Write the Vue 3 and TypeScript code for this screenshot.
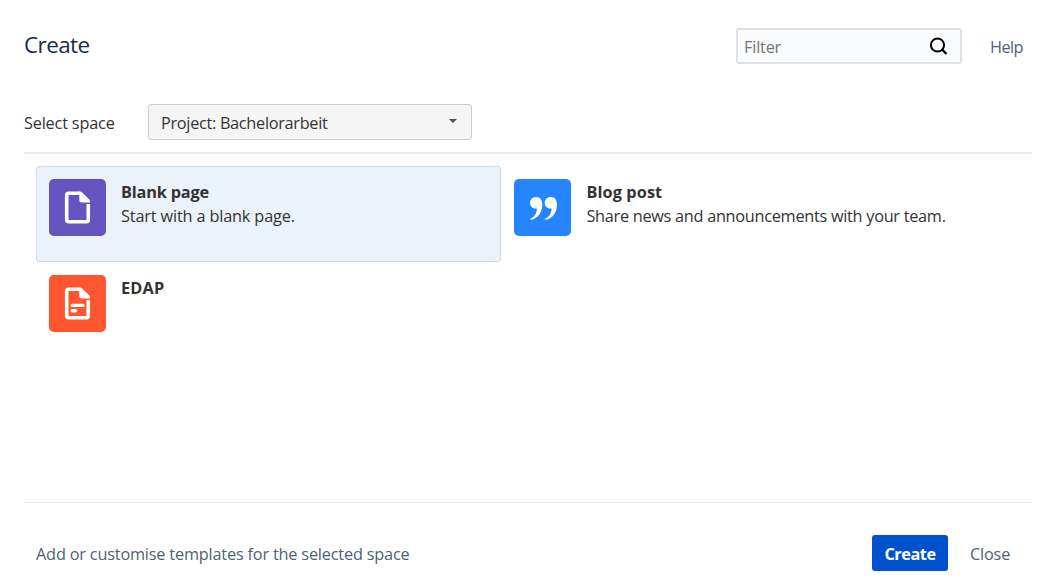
<script setup lang="ts">
import { ref } from 'vue'

interface Template {
  id: string
  kind: 'blank' | 'quote' | 'document'
  title: string
  description: string
}

const templates: Template[] = [
  { id: 'blank-page', kind: 'blank', title: 'Blank page', description: 'Start with a blank page.' },
  { id: 'blog-post', kind: 'quote', title: 'Blog post', description: 'Share news and announcements with your team.' },
  { id: 'edap', kind: 'document', title: 'EDAP', description: '' },
]

const quoteMark =
  'M22.3 18 C26 18 28.3 21 28.3 25.8 C28.3 33.6 23.4 40.2 16.8 40.8 C16 40.8 15.9 39.7 16.7 39.4 C20.6 37.8 22.8 34 22.9 29.4 C19 30.2 16 27.5 16 23.8 C16 20.4 18.7 18 22.3 18 Z'

const selected = ref('blank-page')
const filter = ref('')
</script>

<template>
  <div class="dialog">
    <header class="header">
      <h1 class="title">Create</h1>
      <div class="filter">
        <input v-model="filter" class="filter-input" type="text" placeholder="Filter" />
        <svg class="search" width="20" height="20" viewBox="0 0 20 20">
          <circle cx="8.5" cy="9" r="6.6" fill="none" stroke="#000" stroke-width="2" />
          <path d="M13.1 13.6 L17.5 18" stroke="#000" stroke-width="2.3" />
        </svg>
      </div>
      <a class="help">Help</a>
    </header>

    <div class="space-row">
      <span class="space-label">Select space</span>
      <div class="select">
        <span class="select-value">Project: Bachelorarbeit</span>
        <svg class="caret" width="8" height="4" viewBox="0 0 8 4"><path d="M0 0 H8 L4 4 Z" fill="#505050" /></svg>
      </div>
    </div>

    <main class="templates">
      <div
        v-for="t in templates"
        :key="t.id"
        class="card"
        :class="[t.id, { selected: t.id === selected }]"
        @click="selected = t.id"
      >
        <svg class="icon" :class="t.kind" width="57" height="57" viewBox="0 0 57 57">
          <template v-if="t.kind === 'quote'">
            <path :d="quoteMark" fill="#fff" />
            <path :d="quoteMark" fill="#fff" transform="translate(14.7 0)" />
          </template>
          <template v-else>
            <path d="M39.3 25 V40.8 Q39.3 42.8 37.3 42.8 H19.7 Q17.7 42.8 17.7 40.8 V16.2 Q17.7 14.2 19.7 14.2 H31" fill="none" stroke="#fff" stroke-width="3.6" />
            <path d="M30.3 12.4 H31.2 Q32 12.4 32.7 13 L40.3 20.6 Q41 21.3 41 22.2 V23.4 H32.8 Q30.3 23.4 30.3 20.9 Z" fill="#fff" />
            <path v-if="t.kind === 'document'" d="M23.2 30.4 H34 M23.2 35.8 H26.6" fill="none" stroke="#fff" stroke-width="3.4" stroke-linecap="round" />
          </template>
        </svg>
        <div class="card-text">
          <div class="card-title">{{ t.title }}</div>
          <div class="card-description">{{ t.description }}</div>
        </div>
      </div>
    </main>

    <footer class="footer">
      <a class="customise">Add or customise templates for the selected space</a>
      <button class="create" type="button">Create</button>
      <a class="close">Close</a>
    </footer>
  </div>
</template>

<style>
body {
  background: #fff;
}
</style>

<style scoped>
.dialog {
  box-sizing: border-box;
  display: flex;
  flex-direction: column;
  width: 1057px;
  height: 582px;
  padding: 0 25px 0 24px;
  overflow: hidden;
  background: #fff;
  color: #333;
  font-family: 'Open Sans', 'Noto Sans', sans-serif;
  font-size: 16.3px;
  letter-spacing: -0.19px;
  line-height: 24px;
  white-space: nowrap;
}
.header {
  display: flex;
  align-items: center;
  height: 36px;
  margin-top: 28px;
}
.title {
  flex: 1;
  margin: 0 0 2px;
  color: #172b4d;
  font-size: 22.4px;
  font-weight: 400;
  letter-spacing: -0.55px;
  line-height: 32px;
}
.filter {
  box-sizing: border-box;
  display: flex;
  align-items: center;
  width: 226px;
  height: 36px;
  padding: 0 11px 0 6px;
  border: 2px solid #dfe1e6;
  border-radius: 3px;
  background: #fafbfc;
}
.filter-input {
  flex: 1;
  min-width: 0;
  padding: 2px 0 0;
  border: 0;
  outline: 0;
  background: transparent;
  color: #333;
  font: inherit;
  letter-spacing: inherit;
}
.filter-input::placeholder {
  color: #757575;
}
.help {
  width: 42px;
  margin-left: 28px;
  padding-top: 2px;
  color: #505f79;
  letter-spacing: -0.6px;
}
.space-row {
  display: flex;
  align-items: center;
  height: 36px;
  padding: 40px 0 12px;
  border-bottom: 2px solid #ebecf0;
}
.space-label {
  width: 124px;
  padding-top: 2px;
}
.select {
  box-sizing: border-box;
  display: flex;
  align-items: center;
  justify-content: space-between;
  width: 324px;
  height: 36px;
  padding: 0 14px 0 12px;
  border: 1px solid #ccc;
  border-radius: 3px;
  background: #f5f5f5;
}
.select-value {
  padding-top: 2px;
  letter-spacing: -0.3px;
}
.caret {
  margin-top: -3px;
}
.templates {
  display: grid;
  grid-template-columns: 465px 465px;
  grid-auto-rows: 96px;
  column-gap: 0.4px;
  height: 336px;
  padding: 12px 12px 0;
}
.card {
  box-sizing: border-box;
  display: flex;
  gap: 15px;
  padding: 12px;
  border: 1px solid transparent;
  border-radius: 3px;
}
.card.selected {
  border-color: #c9daee;
  background: #ebf2f9;
}
.icon {
  flex: none;
  border-radius: 5px;
}
.icon.blank {
  background: #6554c0;
}
.icon.quote {
  background: #2684ff;
}
.icon.document {
  background: #ff5630;
}
.card-text {
  padding-top: 1px;
}
.card-title {
  font-weight: 700;
}
.blog-post .card-title {
  letter-spacing: 0.1px;
}
.edap .card-title {
  letter-spacing: 0.2px;
}
.card-description {
  letter-spacing: -0.16px;
}
.blog-post .card-description {
  letter-spacing: -0.28px;
}
.footer {
  display: flex;
  align-items: center;
  height: 79px;
  padding: 0 0 0 12px;
  border-top: 1px solid #ebebeb;
  box-sizing: border-box;
}
.customise {
  flex: 1;
  margin-top: 24px;
  color: #505f79;
}
.create {
  width: 76px;
  height: 36px;
  margin-top: 22px;
  padding: 2px 0 0;
  border: 0;
  border-radius: 3px;
  background: #0052cc;
  color: #fff;
  font: inherit;
  font-weight: 700;
  letter-spacing: -0.45px;
}
.close {
  width: 62px;
  margin: 24px 0 0 22px;
  color: #505f79;
}
</style>
